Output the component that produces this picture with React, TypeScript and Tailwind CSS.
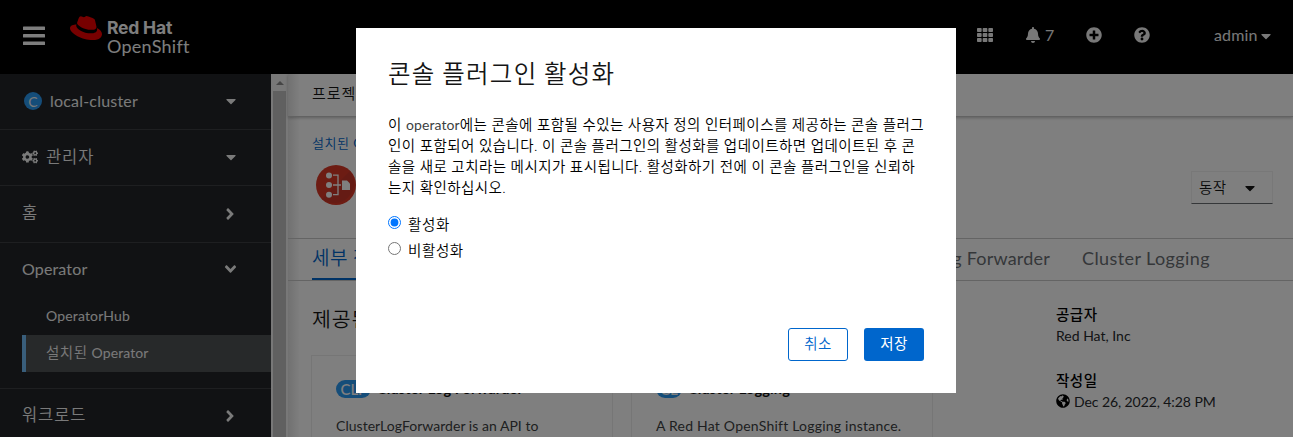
import React from "react";
import {
  FaAngleDown,
  FaAngleRight,
  FaBell,
  FaCaretDown,
  FaCogs,
  FaGlobeAmericas,
  FaPlusCircle,
  FaQuestionCircle,
  FaRedhat,
  FaTh,
} from "react-icons/fa";

function Masthead() {
  return (
    <header className="flex h-[74px] shrink-0 items-start bg-black text-[#fcfcfc]">
      <svg className="ml-[23px] mt-[26px]" width="22" height="20" viewBox="0 0 22 20" fill="currentColor">
        <rect x="0" y="0.5" width="22" height="3.6" rx="0.6" />
        <rect x="0" y="8" width="22" height="3.6" rx="0.6" />
        <rect x="0" y="15.5" width="22" height="3.6" rx="0.6" />
      </svg>
      <FaRedhat className="ml-[25px] mt-[12px] size-[32px] text-[#ee0000]" />
      <div className="ml-[5px] mt-[19px] whitespace-nowrap">
        <div className="font-['Inter'] text-[17.5px] font-bold leading-[18px] tracking-[-0.2px]">Red Hat</div>
        <div className="text-[18px] leading-[18px] tracking-[0.25px]">OpenShift</div>
      </div>
      <div className="ml-auto flex h-[70px] items-center text-[#f0f0f0]">
        <FaTh className="size-4" />
        <FaBell className="ml-[33px] h-4 w-[14px]" />
        <span className="ml-[5px] w-[10px] text-[16px]">7</span>
        <FaPlusCircle className="ml-[31px] size-4" />
        <FaQuestionCircle className="ml-8 size-4" />
        <span className="ml-[64px] w-[44px] text-[16px] tracking-[0.15px]">admin</span>
        <FaCaretDown className="ml-[3px] mr-[22px] mt-[1px] h-4 w-[10px]" />
      </div>
    </header>
  );
}

function Sidebar() {
  return (
    <nav className="flex w-[271px] shrink-0 flex-col bg-[#222528] text-[16px] text-[#f4f4f4]">
      <div className="flex h-[56px] shrink-0 items-center border-b border-[#3c3f42] pb-px pl-6 pr-[35px]">
        <span className="flex size-[18px] items-center justify-center rounded-full bg-[#2b9af3] text-[14px]">C</span>
        <span className="ml-2 tracking-[0.2px]">local-cluster</span>
        <FaCaretDown className="ml-auto h-4 w-[10px]" />
      </div>
      <div className="flex h-[56px] shrink-0 items-center border-b border-[#3c3f42] pb-px pl-[22px] pr-[35px]">
        <FaCogs className="size-4" />
        <span className="ml-2 text-[16.5px] font-[350] tracking-[0.9px]">관리자</span>
        <FaCaretDown className="ml-auto h-4 w-[10px]" />
      </div>
      <div className="flex h-[57px] shrink-0 items-center border-b border-[#3c3f42] pb-px pl-[22px] pr-[36px]">
        <span className="text-[16.5px] font-[350]">홈</span>
        <FaAngleRight className="ml-auto h-[18px] w-[10px]" />
      </div>
      <div className="h-[146px] shrink-0 border-b border-[#3c3f42]">
        <div className="flex h-[55px] items-center pb-[3px] pl-[22px] pr-[34px]">
          <span className="text-[16px] tracking-[0.15px]">Operator</span>
          <FaAngleDown className="ml-auto h-[18px] w-[13px]" />
        </div>
        <div className="flex h-[37px] items-center pb-[3px] pl-[46px] text-[14px] tracking-[0.15px]">OperatorHub</div>
        <div className="ml-[22px] flex h-[37px] items-center border-l-4 border-[#73bcf7] bg-[#4f5255] pb-[2px] pl-5 text-[14px]">
          <span className="text-[14.5px] font-[350] tracking-[0.5px]">설치된</span>
          <span className="ml-1 tracking-[0.1px]">Operator</span>
        </div>
      </div>
      <div className="flex h-[53px] shrink-0 items-center pl-[22px] pr-[36px]">
        <span className="text-[16.5px] font-[350] tracking-[0.9px]">워크로드</span>
        <FaAngleRight className="ml-auto h-[18px] w-[10px]" />
      </div>
    </nav>
  );
}

function Scrollbar() {
  return (
    <div className="flex w-[17px] shrink-0 flex-col items-center bg-[#f1f1f1]">
      <svg className="mt-[7px]" width="8" height="4" viewBox="0 0 8 4" fill="#8a8a8a">
        <path d="M4 0 8 4H0Z" />
      </svg>
      <div className="mt-[6px] w-[13px] grow bg-[#c1c1c1]" />
    </div>
  );
}

function OperatorLogo() {
  return (
    <svg width="40" height="40" viewBox="0 0 40 40">
      <circle cx="20" cy="20" r="20" fill="#db3927" />
      <path d="M34 6A20 20 0 0 1 6 34Z" fill="#cb3728" />
      <g fill="#fff">
        <circle cx="13" cy="10.5" r="3" />
        <circle cx="13" cy="20" r="3" />
        <circle cx="13" cy="29.7" r="3" />
        <path d="M26 15.5h5l3 3V25h-8Z" />
      </g>
      <path d="M17 10.2h5v19.5h-5M17 20h8" fill="none" stroke="#fff" strokeWidth="1.3" />
    </svg>
  );
}

function ApiCard(props: { badge: string; badgeClass: string; title: string; text: string; textClass: string }) {
  return (
    <div className="h-[120px] w-[302px] shrink-0 border border-[#ececec] px-6 pt-[22px] text-[#151515]">
      <div className="flex items-center">
        <span className={`flex h-[18px] items-center justify-center rounded-full bg-[#2b9af3] text-[15px] font-medium text-white ${props.badgeClass}`}>
          {props.badge}
        </span>
        <span className="ml-[6px] whitespace-nowrap text-[14.5px] font-bold leading-[22px] tracking-[0.15px]">{props.title}</span>
      </div>
      <p className={`mt-[15px] whitespace-nowrap text-[14px] leading-[21px] text-[#3c3f42] ${props.textClass}`}>{props.text}</p>
    </div>
  );
}

function Content() {
  return (
    <main className="flex min-w-0 grow flex-col bg-white bg-linear-to-r from-[#e2e2e2] to-white to-[12px] text-[#151515]">
      <div className="flex h-[43px] shrink-0 items-center border-b border-[#c4c4c4] pb-1 pl-6 text-[15px] font-[350] tracking-[0.9px] shadow-[0_1px_3px_rgba(0,0,0,0.25)]">
        프로젝트
      </div>
      <div className="h-[121px] shrink-0 pl-6 pt-[15px]">
        <div className="text-[13px] leading-[22px] tracking-[0.5px] text-[#0066cc]">
          <span className="font-[350]">설치된</span> Operator
        </div>
        <div className="flex pl-[4px] pt-[11px]">
          <OperatorLogo />
          <button className="ml-auto mr-5 mt-[6px] flex h-[33px] w-[82px] items-center border border-b-[#6a6e73] border-[#f0f0f0] pl-[7px] text-[14.5px]">
            <span className="font-[350] tracking-[0.5px]">동작</span>
            <FaCaretDown className="ml-[18px] h-4 w-[10px]" />
          </button>
        </div>
      </div>
      <div className="flex h-[43px] shrink-0 whitespace-nowrap border-y border-[#c8c8c8] pl-6 pr-[83px] text-[18px] leading-[39px] text-[#6a6e73]">
        <div className="h-[41px] border-b-2 border-[#0066cc] text-[19px] font-[350] leading-[38px] tracking-[0.6px] text-[#0066cc] [word-spacing:-1px]">세부 정보</div>
        <div className="ml-auto tracking-[0.2px]">Cluster Log Forwarder</div>
        <div className="ml-8 w-[128px] tracking-[0.4px]">Cluster Logging</div>
      </div>
      <div className="flex">
        <section className="w-[743px] shrink-0 pl-[23px] pt-[24px]">
          <h2 className="pl-px text-[20.5px] font-[350] leading-[28px] tracking-[0.9px]">제공된 API</h2>
          <div className="mt-[22px] flex gap-[18px]">
            <ApiCard badge="CLF" badgeClass="w-[35px]" title="Cluster Log Forwarder" text="ClusterLogForwarder is an API to" textClass="tracking-[0.03px]" />
            <ApiCard badge="CL" badgeClass="w-[26px]" title="Cluster Logging" text="A Red Hat OpenShift Logging instance." textClass="tracking-[0.22px]" />
          </div>
        </section>
        <dl className="pl-[25px] pt-[23px] text-[14px] leading-[22px] text-[#26292c]">
          <dt className="text-[14.5px] font-medium tracking-[0.5px] text-black">공급자</dt>
          <dd className="mt-[-1px]">Red Hat, Inc</dd>
          <dt className="mt-[23px] text-[14.5px] font-medium tracking-[0.5px] text-black">작성일</dt>
          <dd className="mt-[-1px] flex items-center whitespace-nowrap">
            <FaGlobeAmericas className="mb-[3px] size-[14px] text-black" />
            <span className="ml-[4px] tracking-[-0.08px]">Dec 26, 2022, 4:28 PM</span>
          </dd>
        </dl>
      </div>
    </main>
  );
}

function PluginModal() {
  return (
    <div className="absolute inset-0 flex items-start bg-black/50">
      <div role="dialog" className="ml-[356px] mt-[28px] flex h-[365px] w-[600px] flex-col bg-white px-8 text-[#151515]">
        <h1 className="mt-[28px] whitespace-nowrap text-[24.5px] font-[350] leading-[36px] tracking-[1.3px] [word-spacing:-1.5px]">콘솔 플러그인 활성화</h1>
        <div className="mt-[22px] whitespace-nowrap text-[14.5px] font-[350] leading-[21px] tracking-[0.44px] text-black [word-spacing:-0.25px]">
          <p>
            이 <span className="text-[14px] font-normal tracking-[0.1px] text-[#3c3f42]">operator</span>에는 콘솔에 포함될 수있는 사용자 정의 인터페이스를 제공하는 콘솔 플러그
          </p>
          <p>인이 포함되어 있습니다. 이 콘솔 플러그인의 활성화를 업데이트하면 업데이트된 후 콘</p>
          <p>솔을 새로 고치라는 메시지가 표시됩니다. 활성화하기 전에 이 콘솔 플러그인을 신뢰하</p>
          <p>는지 확인하십시오.</p>
        </div>
        <div className="mt-[13px] text-[14.5px] font-[350] leading-[28px] tracking-[0.6px] text-black">
          <label className="flex h-[26px]">
            <input type="radio" name="plugin" defaultChecked className="mr-[7px] mt-[5px] size-[13px] accent-[#0075ff]" />
            활성화
          </label>
          <label className="flex h-[26px]">
            <input type="radio" name="plugin" className="mr-[7px] mt-[5px] size-[13px]" />
            비활성화
          </label>
        </div>
        <div className="mb-8 mt-auto flex justify-end gap-4 text-[14.5px] font-[350] tracking-[0.4px]">
          <button className="h-[33px] w-[60px] rounded-[3px] border border-[#0066cc] pb-[2px] text-[#0066cc]">취소</button>
          <button className="h-[33px] w-[60px] rounded-[3px] bg-[#0066cc] pb-[2px] font-normal text-white">저장</button>
        </div>
      </div>
    </div>
  );
}

export default function App() {
  return (
    <div className="relative flex h-[437px] w-[1293px] flex-col overflow-hidden font-['Lato','Noto_Sans_CJK_KR',sans-serif]">
      <Masthead />
      <div className="flex min-h-0 grow">
        <Sidebar />
        <Scrollbar />
        <Content />
      </div>
      <PluginModal />
    </div>
  );
}
